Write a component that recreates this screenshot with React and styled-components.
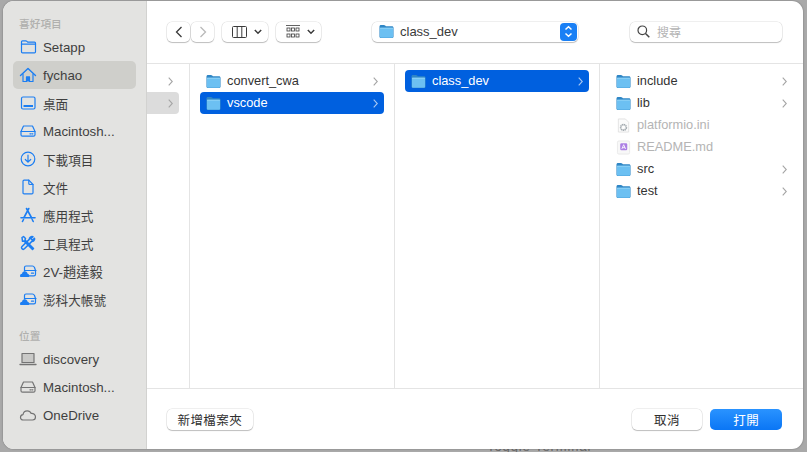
import React from 'react';
import styled, { createGlobalStyle } from 'styled-components';

const GlobalStyle = createGlobalStyle`
  html, body {
    margin: 0;
    height: 452px;
    overflow: hidden;
    background: #a9a9a9;
    font-family: "Liberation Sans", "Noto Sans CJK TC", sans-serif;
    -webkit-font-smoothing: antialiased;
  }
  * { box-sizing: border-box; }
`;

const Backdrop = styled.div`
  width: 807px;
  height: 452px;
  padding: 1px 3px 0 3px;
  overflow: hidden;
`;

const Dialog = styled.div`
  position: relative;
  display: flex;
  width: 800px;
  height: 448px;
  border-radius: 11px;
  overflow: hidden;
  background: #fff;
  box-shadow: 0 0 2px rgba(0, 0, 0, 0.35);
`;

const BehindText = styled.div`
  margin: -10px 0 0 484px;
  font-size: 13px;
  line-height: 16px;
  color: #6a6a6a;
  letter-spacing: 0.9px;
`;

const Sidebar = styled.nav`
  width: 144px;
  flex: none;
  padding: 14px 10px 0;
  background: #e3e3e1;
  border-right: 1px solid #d2d2d0;
`;

const SectionLabel = styled.div`
  height: 18px;
  padding-left: 6px;
  margin-top: ${p => p.$gap || 0}px;
  font-size: 10.7px;
  line-height: 18px;
  color: #b0b0ae;
  font-weight: 500;
`;

const SideRow = styled.div`
  display: flex;
  align-items: center;
  height: 28px;
  border-radius: 5px;
  background: ${p => (p.$active ? '#cfcfcb' : 'transparent')};
  color: #3f3f3f;
  font-size: ${p => (p.$cjk ? 12.6 : 13.3)}px;
`;

const SideIcon = styled.span`
  display: flex;
  justify-content: center;
  width: 30px;
  flex: none;
  color: ${p => (p.$gray ? '#747474' : '#1c7ef2')};
`;

const Main = styled.main`
  flex: 1;
  min-width: 0;
  display: flex;
  flex-direction: column;
`;

const Toolbar = styled.header`
  display: flex;
  align-items: center;
  height: 63px;
  flex: none;
  padding: 0 21px 1px 20px;
  border-bottom: 1px solid #e4e4e4;
`;

const Raised = styled.div`
  display: flex;
  align-items: center;
  height: 20px;
  background: #fff;
  border-radius: 5px;
  box-shadow: 0 0 0 0.5px rgba(0, 0, 0, 0.13), 0 1px 1px rgba(0, 0, 0, 0.2);
`;

const NavButton = styled(Raised)`
  justify-content: center;
  width: 23px;
  margin-right: 1px;
  color: ${p => (p.$dim ? '#b9b9b9' : '#3a3a3a')};
`;

const ViewButton = styled(Raised)`
  justify-content: space-between;
  width: ${p => p.$w}px;
  margin-left: ${p => p.$ml}px;
  padding: 0 6px 0 10px;
  color: #3c3c3c;
`;

const PathPopup = styled(Raised)`
  width: 206px;
  margin-left: 51px;
  padding: 0 1px 0 7px;
  gap: 6px;
  font-size: 13px;
  color: #3a3a3a;
`;

const Stepper = styled.span`
  display: flex;
  align-items: center;
  justify-content: center;
  width: 17px;
  height: 18px;
  margin-left: auto;
  border-radius: 4px;
  background: #1a80f5;
`;

const SearchBox = styled(Raised)`
  width: 152px;
  margin-left: auto;
  padding-left: 7px;
  gap: 7px;
  font-size: 12px;
  color: #b4b4b4;
`;

const Columns = styled.section`
  flex: 1;
  display: flex;
  min-height: 0;
`;

const Column = styled.div`
  width: ${p => p.$w}px;
  flex: none;
  padding: 6px 10px 0 ${p => (p.$tight ? 0 : 10)}px;
  border-right: ${p => (p.$last ? 'none' : '1px solid #e4e4e4')};
`;

const FileRow = styled.div`
  display: flex;
  align-items: center;
  height: 22px;
  padding: 0 6px;
  gap: 6px;
  font-size: 12.8px;
  border-radius: ${p => (p.$tight ? '0 4px 4px 0' : '4px')};
  background: ${p => (p.$selected ? '#0060df' : p.$muted ? '#dcdcdc' : 'transparent')};
  color: ${p => (p.$selected ? '#fff' : p.$disabled ? '#b4b4b4' : '#333')};
`;

const RowName = styled.span`
  flex: 1;
  padding-bottom: 2px;
`;

const Chevron = styled.svg`
  flex: none;
  width: 5px;
  height: 9px;
  fill: none;
  stroke: ${p => (p.$light ? '#a9c8f2' : '#a5a5a5')};
  stroke-width: 1.1;
`;

const Footer = styled.footer`
  display: flex;
  align-items: center;
  height: 61px;
  flex: none;
  padding: 0 21px 0 20px;
  border-top: 1px solid #e4e4e4;
`;

const TextButton = styled(Raised)`
  justify-content: center;
  height: 21px;
  width: ${p => p.$w}px;
  font-size: 12.5px;
  letter-spacing: 0.4px;
  color: #2f2f2f;
  margin-left: ${p => p.$ml || 0}px;
`;

const PrimaryButton = styled(TextButton)`
  color: #fff;
  background: linear-gradient(#2a93ff, #0a76f5);
  box-shadow: none;
`;

const Folder = () => (
  <svg width="15" height="15" viewBox="0 0 16 16" style={{ flex: 'none' }}>
    <path d="M.5 2.800C.5 1.700 1.100 1.100 2.200 1.100h3c.7 0 1 .2 1.400.6l.8.8h6.400c1 0 1.700.6 1.700 1.700v9.200c0 1-.6 1.600-1.700 1.600H2.200C1.100 15.000.5 14.400.5 13.400z" fill="#2f86c5" />
    <rect x="1" y="4" width="14" height="10.600" rx="1" fill="#6cc0f2" />
    <rect x="1" y="4" width="14" height="1" fill="#93d4f7" />
  </svg>
);

const Line = ({ children, w = 18, h = 18, vb = '0 0 18 18' }) => (
  <svg width={w} height={h} viewBox={vb} fill="none" stroke="currentColor" strokeWidth="1.200" strokeLinejoin="round" strokeLinecap="round">
    {children}
  </svg>
);

const DriveShape = () => (
  <>
    <path d="M4.500 4h9l2.500 5.500v3.200c0 .9-.6 1.500-1.500 1.500h-11c-.9 0-1.500-.6-1.500-1.500V9.500z" />
    <path d="M2 9.500h14" />
    <path d="M11 11.800h.8M13 11.800h.8" strokeWidth="1.300" />
  </>
);

const CloudDrive = () => (
  <Line>
    <path d="M5.500 9V5.500c0-.9.600-1.500 1.500-1.500h6.500c1 0 1.500.5 2 1.500l1 3v3.700c0 1-.6 1.600-1.500 1.600H9" />
    <path d="M6 8.500h11" />
    <path d="M12.500 11.200h2" strokeWidth="1.300" />
    <path d="M1 14c0-1.500 1-2.300 2-2.300.4-1.700 1.500-2.400 2.800-2.400 1.500 0 2.500 1 2.800 2.400 1 .1 1.700 1 1.700 2.100 0 .8-.4 1.200-1.200 1.200H2.200C1.400 15 1 14.600 1 14z" fill="currentColor" stroke="none" />
  </Line>
);

const sideIcons = {
  folder: (
    <Line>
      <path d="M2.500 5V3.800c0-.6.400-1 1-1h3.300c.5 0 .8.200 1.100.500l.8.800h6.800c.6 0 1 .4 1 1v8.700c0 .7-.4 1.100-1 1.100H3.500c-.6 0-1-.4-1-1.100z" />
      <path d="M2.500 6.200h14" />
    </Line>
  ),
  home: (
    <Line>
      <path d="M1.500 9.500 9 2.500l7.500 7" strokeWidth="1.400" />
      <path d="M4 8v7.500h3.500V11h3v4.500H14V8" fill="none" />
      <path d="M7 15.500V10.500h4v5z" fill="currentColor" stroke="none" />
    </Line>
  ),
  desktop: (
    <Line>
      <rect x="2.500" y="3" width="13.500" height="12" rx="1.500" />
      <rect x="4.500" y="11" width="9.500" height="2" fill="currentColor" stroke="none" />
    </Line>
  ),
  drive: <Line><DriveShape /></Line>,
  download: (
    <Line>
      <circle cx="9" cy="9" r="6.800" />
      <path d="M9 5.200v7M6.300 9.500 9 12.200l2.700-2.700" />
    </Line>
  ),
  doc: (
    <Line>
      <path d="M4 3.300c0-.7.400-1.100 1.100-1.100h4.700l4.200 4.300v8.200c0 .7-.4 1.100-1.100 1.100h-7.800c-.7 0-1.100-.4-1.100-1.100z" />
      <path d="M9.800 2.200v3.300c0 .6.400 1 1 1H14" />
    </Line>
  ),
  apps: (
    <Line>
      <path d="M9.800 2.500 5 11.500M7.500 2.500l5.200 9.500" strokeWidth="1.600" />
      <path d="M2 11.800h14" strokeWidth="1.600" />
      <path d="M4.500 13.500l-1 2M13.200 13.500l1 2" strokeWidth="1.600" />
    </Line>
  ),
  tools: (
    <Line>
      <path d="M3 3.500 4.500 2.500l2 2-.5 1.500 8.500 8.500-1 1L5 7l-1.500.3z" strokeWidth="1.500" />
      <path d="M15.500 4.200 13.300 6.300 11.800 4.800 14 2.700c-1.800-.7-3.800.7-3.700 2.700L3 12.500c-1 1-.3 2 .2 2.400.6.500 1.400.7 2.200-.1l7.200-7.200c2 .2 3.400-1.700 2.900-3.400z" strokeWidth="1.500" />
    </Line>
  ),
  cloudDrive: <CloudDrive />,
  laptop: (
    <Line>
      <rect x="3" y="3.500" width="12" height="9" fill="#c9c9c7" />
      <path d="M1 14.500h16" strokeWidth="1.300" />
    </Line>
  ),
  cloud: (
    <Line>
      <path d="M1.500 11.500c0-1.700 1.100-2.800 2.500-2.900C4.400 6.300 6 4.800 8.200 4.800c1.900 0 3.300 1 4 2.600 2.400-.2 4.300 1.400 4.300 3.600 0 1.800-1.200 3-3 3H4.200c-1.700 0-2.700-1.100-2.700-2.500z" />
    </Line>
  ),
};

const favourites = [
  ['folder', 'Setapp'],
  ['home', 'fychao', true],
  ['desktop', '桌面'],
  ['drive', 'Macintosh...'],
  ['download', '下載項目'],
  ['doc', '文件'],
  ['apps', '應用程式'],
  ['tools', '工具程式'],
  ['cloudDrive', '2V-趙達毅'],
  ['cloudDrive', '澎科大帳號'],
];

const places = [
  ['laptop', 'discovery'],
  ['drive', 'Macintosh...'],
  ['cloud', 'OneDrive'],
];

const ChevronRight = ({ light }) => (
  <Chevron viewBox="0 0 5 9" $light={light}>
    <path d="M.7.7 4.300 4.500.7 8.300" />
  </Chevron>
);

const IniIcon = () => (
  <svg width="15" height="15" viewBox="0 0 16 16" style={{ flex: 'none' }}>
    <path d="M2.500 1h7.500l3.500 3.500V15h-11z" fill="#fbfbfb" stroke="#dcdcdc" strokeWidth="0.800" />
    <circle cx="8" cy="10" r="3" fill="none" stroke="#a4abb0" strokeWidth="1.800" strokeDasharray="1.500 .5" />
    <circle cx="8" cy="10" r="1" fill="#fff" />
  </svg>
);

const MdIcon = () => (
  <svg width="15" height="15" viewBox="0 0 16 16" style={{ flex: 'none' }}>
    <rect x="1.500" y="1" width="13" height="14" rx="1.500" fill="#f8f8f8" stroke="#e4e4e4" strokeWidth="0.800" />
    <rect x="4.500" y="3.500" width="7.500" height="7.500" rx="1.300" fill="#ab7fe3" />
    <path d="M6.200 9.500 8.200 5l2 4.500M6.800 8.200h2.800" stroke="#fff" strokeWidth="0.900" fill="none" />
  </svg>
);

const SideItem = ({ icon, label, active, gray }) => (
  <SideRow $active={active} $cjk={/^[^\x00-\x7f]+$/.test(label)}>
    <SideIcon $gray={gray}>{sideIcons[icon]}</SideIcon>
    <span>{label}</span>
  </SideRow>
);

const EntryRow = ({ name, selected, chevron = true }) => (
  <FileRow $selected={selected}>
    <Folder />
    <RowName>{name}</RowName>
    {chevron && <ChevronRight light={selected} />}
  </FileRow>
);

export default function App() {
  return (
    <>
      <GlobalStyle />
      <Backdrop>
        <Dialog>
          <Sidebar>
            <SectionLabel>喜好項目</SectionLabel>
            {favourites.map(([icon, label, active]) => (
              <SideItem key={label} icon={icon} label={label} active={active} />
            ))}
            <SectionLabel $gap={14}>位置</SectionLabel>
            {places.map(([icon, label]) => (
              <SideItem key={label} icon={icon} label={label} gray />
            ))}
          </Sidebar>
          <Main>
            <Toolbar>
              <NavButton>
                <svg width="8" height="12" viewBox="0 0 8 12" fill="none" stroke="currentColor" strokeWidth="1.300"><path d="M6.500 1 1.500 6l5 5" /></svg>
              </NavButton>
              <NavButton $dim>
                <svg width="8" height="12" viewBox="0 0 8 12" fill="none" stroke="currentColor" strokeWidth="1.300"><path d="M1.500 1l5 5-5 5" /></svg>
              </NavButton>
              <ViewButton $w={46} $ml={7}>
                <svg width="15" height="12" viewBox="0 0 15 12" fill="none" stroke="currentColor"><rect x="0.500" y="0.500" width="14" height="11" rx="1" /><path d="M5.200.5v11M9.800.5v11" /></svg>
                <svg width="8" height="6" viewBox="0 0 8 6" fill="none" stroke="currentColor" strokeWidth="1.500"><path d="M.8 1 4 4.200 7.200 1" /></svg>
              </ViewButton>
              <ViewButton $w={45} $ml={8}>
                <svg width="14" height="14" viewBox="0 0 14 14" fill="none" stroke="currentColor" strokeWidth="0.800"><path d="M0 .5h14" /><rect x="1" y="3" width="3" height="3" /><rect x="5.500" y="3" width="3" height="3" /><rect x="10" y="3" width="3" height="3" /><rect x="1" y="9" width="3" height="3" /><rect x="5.500" y="9" width="3" height="3" /><rect x="10" y="9" width="3" height="3" /></svg>
                <svg width="8" height="6" viewBox="0 0 8 6" fill="none" stroke="currentColor" strokeWidth="1.500"><path d="M.8 1 4 4.200 7.200 1" /></svg>
              </ViewButton>
              <PathPopup>
                <Folder />
                <span>class_dev</span>
                <Stepper>
                  <svg width="9" height="13" viewBox="0 0 9 13" fill="none" stroke="#fff" strokeWidth="1.500"><path d="M1.500 4.500 4.500 1.800l3 2.700M1.500 8.500l3 2.700 3-2.700" /></svg>
                </Stepper>
              </PathPopup>
              <SearchBox>
                <svg width="13" height="13" viewBox="0 0 13 13" fill="none" stroke="#444" strokeWidth="1.200"><circle cx="5.300" cy="5.300" r="4.300" /><path d="m8.500 8.500 3.800 3.800" strokeWidth="1.500" /></svg>
                <span>搜尋</span>
              </SearchBox>
            </Toolbar>
            <Columns>
              <Column $w={43} $tight>
                <FileRow $tight><RowName /><ChevronRight /></FileRow>
                <FileRow $tight $muted><RowName /><ChevronRight /></FileRow>
              </Column>
              <Column $w={205}>
                <EntryRow name="convert_cwa" />
                <EntryRow name="vscode" selected />
              </Column>
              <Column $w={205}>
                <EntryRow name="class_dev" selected />
              </Column>
              <Column $w={203} $last>
                <EntryRow name="include" />
                <EntryRow name="lib" />
                <FileRow $disabled><IniIcon /><RowName>platformio.ini</RowName></FileRow>
                <FileRow $disabled><MdIcon /><RowName>README.md</RowName></FileRow>
                <EntryRow name="src" />
                <EntryRow name="test" />
              </Column>
            </Columns>
            <Footer>
              <TextButton $w={86}>新增檔案夾</TextButton>
              <TextButton $w={71} $ml={379}>取消</TextButton>
              <PrimaryButton $w={72} $ml={8}>打開</PrimaryButton>
            </Footer>
          </Main>
        </Dialog>
        <BehindText>Toggle Terminal</BehindText>
      </Backdrop>
    </>
  );
}
